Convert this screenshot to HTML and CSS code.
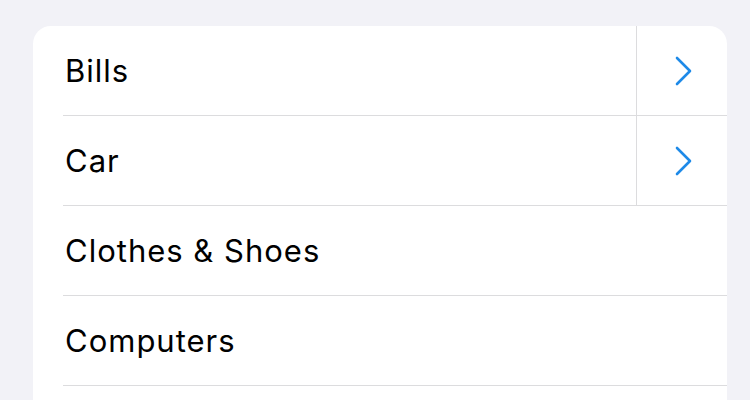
FILE: index.html
```html
<!DOCTYPE html>
<html lang="en">
<head>
<meta charset="utf-8">
<title>Categories</title>
<link rel="stylesheet" href="styles.css">
</head>
<body>
<div class="page">
  <ul class="list">
    <li class="row">
      <div class="cell">
        <span class="label">Bills</span>
        <span class="accessory">
          <svg class="chevron" viewBox="0 0 18 30" width="18" height="30"><path d="M2 2 L15 15 L2 28" fill="none" stroke="#1e8ae8" stroke-width="2.6" stroke-linecap="round" stroke-linejoin="round"/></svg>
        </span>
      </div>
    </li>
    <li class="row">
      <div class="cell">
        <span class="label">Car</span>
        <span class="accessory">
          <svg class="chevron" viewBox="0 0 18 30" width="18" height="30"><path d="M2 2 L15 15 L2 28" fill="none" stroke="#1e8ae8" stroke-width="2.6" stroke-linecap="round" stroke-linejoin="round"/></svg>
        </span>
      </div>
    </li>
    <li class="row"><div class="cell"><span class="label">Clothes &amp; Shoes</span></div></li>
    <li class="row"><div class="cell"><span class="label">Computers</span></div></li>
    <li class="row"><div class="cell"></div></li>
  </ul>
</div>
</body>
</html>
```
FILE: styles.css
```css
html, body {
  margin: 0;
  padding: 0;
  height: 400px;
  overflow: hidden;
  background: #f2f2f7;
}
.page {
  padding: 26px 23px 0 33px;
  font-family: Inter, "Noto Sans", sans-serif;
}
.list {
  list-style: none;
  margin: 0;
  padding: 0;
  background: #ffffff;
  border-radius: 18px;
  overflow: hidden;
}
.row {
  padding-left: 30px;
}
.cell {
  display: flex;
  align-items: stretch;
  height: 89px;
  border-bottom: 1px solid #dcdcde;
}
.label {
  flex: 1;
  display: flex;
  align-items: center;
  padding-left: 2px;
  font-size: 31px;
  color: #000;
  letter-spacing: 1px;
}
.accessory {
  width: 90px;
  border-left: 1px solid #dcdcde;
  display: flex;
  align-items: center;
  justify-content: center;
}
.chevron {
  display: block;
  margin-left: 4px;
}
```
